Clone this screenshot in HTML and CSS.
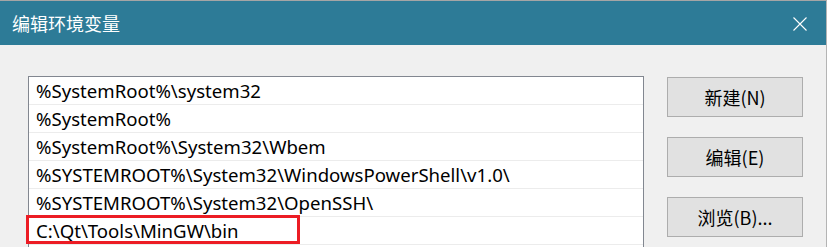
FILE: index.html
```html
<!DOCTYPE html>
<html lang="zh-CN">
<head>
  <meta charset="UTF-8">
  <title>编辑环境变量</title>
  <link rel="stylesheet" href="styles.css">
</head>
<body>
  <div class="window">
    <div class="titlebar">
      <span class="title">编辑环境变量</span>
      <svg class="close" width="14" height="14" viewBox="0 0 14 14">
        <path d="M0.5 0.5 L13.5 13.5 M13.5 0.5 L0.5 13.5" stroke="#fff" stroke-width="1.1" fill="none"/>
      </svg>
    </div>

    <div class="content">
      <div class="list">
        <div class="row">%SystemRoot%\system32</div>
        <div class="row">%SystemRoot%</div>
        <div class="row">%SystemRoot%\System32\Wbem</div>
        <div class="row">%SYSTEMROOT%\System32\WindowsPowerShell\v1.0\</div>
        <div class="row">%SYSTEMROOT%\System32\OpenSSH\</div>
        <div class="row marked">
          C:\Qt\Tools\MinGW\bin
          <div class="highlight"></div>
        </div>
        <div class="row"></div>
      </div>

      <div class="buttons">
        <button class="btn">新建(N)</button>
        <button class="btn">编辑(E)</button>
        <button class="btn">浏览(B)...</button>
      </div>
    </div>
  </div>
</body>
</html>
```

FILE: styles.css
```css
html, body {
  margin: 0;
  padding: 0;
  height: 100%;
  overflow: hidden;
}

body {
  background: #f0f0f0;
  font-family: "Noto Sans", "Noto Sans CJK SC", sans-serif;
}

.window {
  height: 100%;
  border-top: 1px solid #a5a5a5;
  border-right: 1px solid #b4b4b4;
  box-sizing: border-box;
}

.titlebar {
  height: 44px;
  background: #2d7b97;
  display: flex;
  align-items: center;
  justify-content: space-between;
  padding: 0 19px 0 12px;
}

.title {
  color: #fff;
  font-family: "Noto Sans CJK SC", sans-serif;
  font-size: 18px;
  line-height: 1;
}

.close {
  margin-top: 2px;
}

.content {
  display: flex;
  align-items: flex-start;
  gap: 23px;
  padding: 31px 0 0 28px;
}

.list {
  width: 614px;
  background: #fff;
  border: 1px solid #828790;
  border-bottom: none;
}

.row {
  position: relative;
  height: 27px;
  border-bottom: 1px solid #ececec;
  padding-left: 7px;
  font-size: 18.6px;
  line-height: 27px;
  color: #000;
  white-space: nowrap;
}

.highlight {
  position: absolute;
  top: -2px;
  left: -3px;
  width: 268px;
  height: 23px;
  border: 3px solid #ec1c24;
}

.buttons {
  display: flex;
  flex-direction: column;
  gap: 20px;
  padding-top: 1px;
}

.btn {
  width: 136px;
  height: 40px;
  background: #e1e1e1;
  border: 1px solid #adadad;
  font-family: "Noto Sans CJK SC", sans-serif;
  font-size: 18px;
  color: #000;
  padding: 0;
}
```
